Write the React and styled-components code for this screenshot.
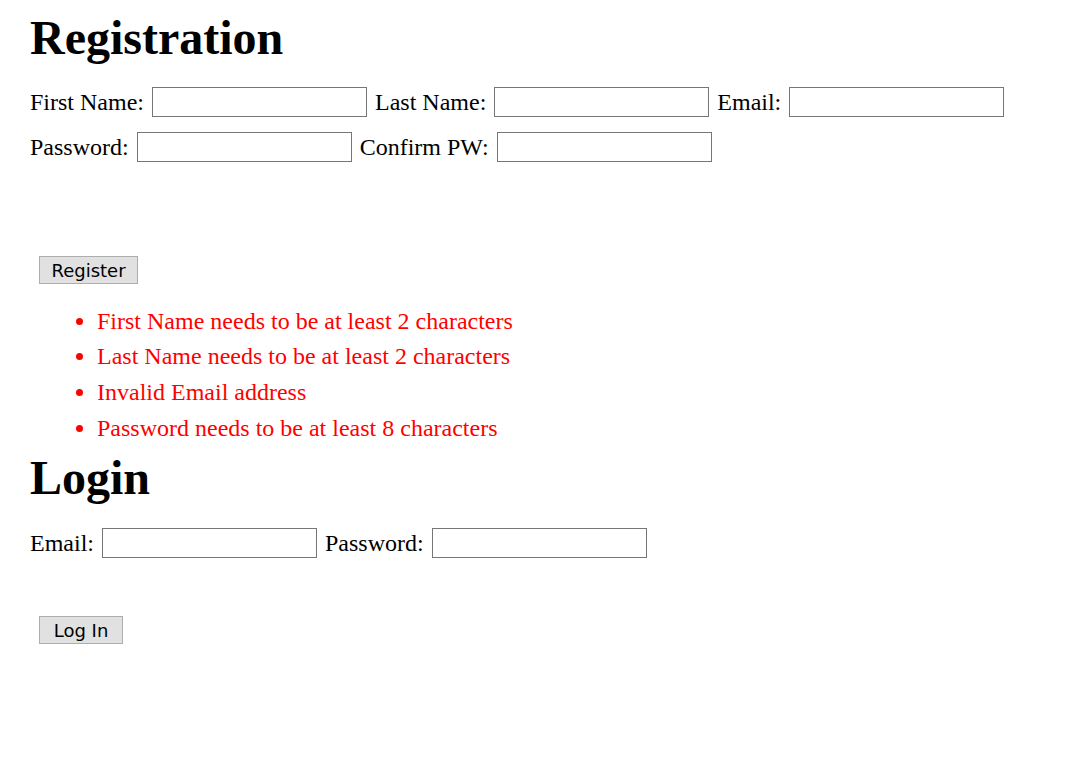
import React from "react";
import styled, { createGlobalStyle } from "styled-components";

const Global = createGlobalStyle`
  html, body { margin: 0; padding: 0; background: #fff; }
  body { font-family: "Liberation Serif", "Times New Roman", serif; font-size: 24px; color: #000; }
`;

const Page = styled.div`
  padding: 10px 30px 40px 30px;
  display: flex;
  flex-direction: column;
  align-items: flex-start;
`;

const Heading = styled.h1`
  margin: ${(p) => p.$top || 0}px 0 0 0;
  font-family: "Liberation Serif", "Times New Roman", serif;
  font-size: 48px;
  font-weight: bold;
  line-height: 55px;
`;

const Row = styled.div`
  display: flex;
  align-items: center;
  column-gap: 8px;
  margin-top: ${(p) => p.$top}px;
  line-height: 27.6px;
`;

const Label = styled.label`
  white-space: nowrap;
  padding-top: 2px;
`;

const Field = styled.input`
  box-sizing: border-box;
  width: 215px;
  height: 30px;
  margin: 0;
  padding: 1px 3px;
  border: 1px solid #767676;
  border-radius: 0;
  background: #fff;
  font-family: "DejaVu Sans", sans-serif;
  font-size: 18px;
  outline: none;
`;

const Button = styled.button`
  box-sizing: border-box;
  width: ${(p) => p.$w}px;
  height: 28px;
  margin: ${(p) => p.$top}px 0 0 9px;
  padding: 1px 0 0 0;
  border: 1px solid #adadad;
  border-radius: 0;
  background: #e1e1e1;
  color: #000;
  font-family: "DejaVu Sans", Tahoma, sans-serif;
  font-size: 18px;
  line-height: 25px;
  text-align: center;
`;

const Errors = styled.ul`
  margin: 19.5px 0 0 0;
  padding: 0 0 0 67px;
  list-style: disc outside;
`;

const ErrorItem = styled.li`
  color: #ff0000;
  font-size: 24px;
  line-height: 35.75px;
`;

const errors = [
  "First Name needs to be at least 2 characters",
  "Last Name needs to be at least 2 characters",
  "Invalid Email address",
  "Password needs to be at least 8 characters",
];

export default function App() {
  return (
    <>
      <Global />
      <Page>
        <Heading>Registration</Heading>
        <Row $top={22}>
          <Label>First Name:</Label>
          <Field type="text" />
          <Label>Last Name:</Label>
          <Field type="text" />
          <Label>Email:</Label>
          <Field type="text" />
        </Row>
        <Row $top={15}>
          <Label>Password:</Label>
          <Field type="password" />
          <Label>Confirm PW:</Label>
          <Field type="password" />
        </Row>
        <Button $w={99} $top={94}>Register</Button>
        <Errors>
          {errors.map((e) => (
            <ErrorItem key={e}>{e}</ErrorItem>
          ))}
        </Errors>
        <Heading $top={3.5}>Login</Heading>
        <Row $top={23}>
          <Label>Email:</Label>
          <Field type="text" />
          <Label>Password:</Label>
          <Field type="password" />
        </Row>
        <Button $w={84} $top={58}>Log In</Button>
      </Page>
    </>
  );
}
